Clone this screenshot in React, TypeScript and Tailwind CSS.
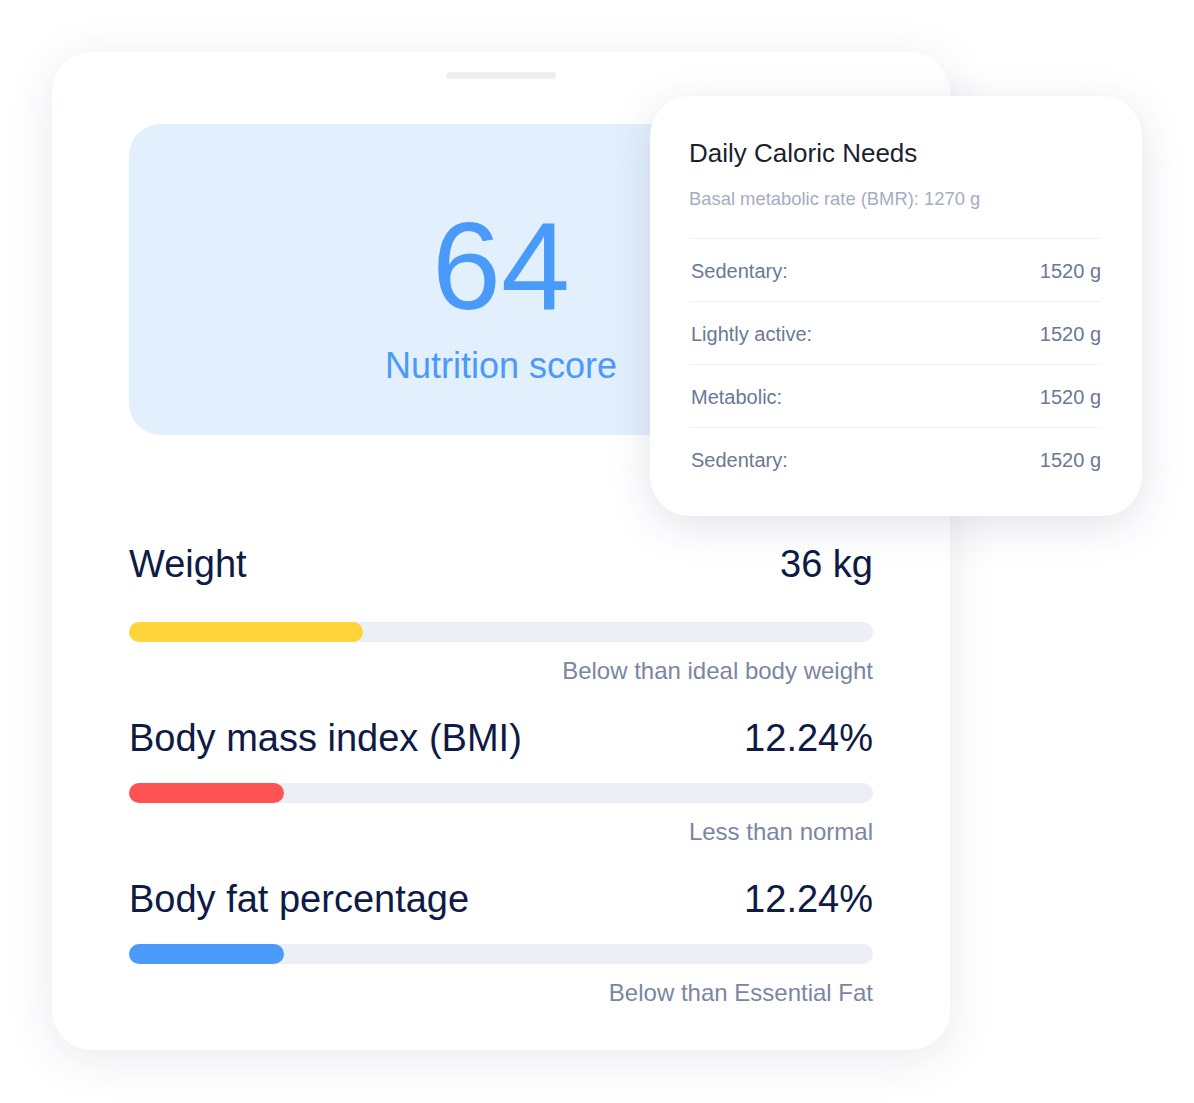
import React from "react";

type Metric = {
    label: string;
    value: string;
    note: string;
    fill: string;
    width: number;
    titleGap: string;
    topGap: string;
};

const metrics: Metric[] = [
    {
        label: "Weight",
        value: "36 kg",
        note: "Below than ideal body weight",
        fill: "bg-[#ffd43b]",
        width: 234,
        titleGap: "mt-[39px]",
        topGap: "mt-[110px]",
    },
    {
        label: "Body mass index (BMI)",
        value: "12.24%",
        note: "Less than normal",
        fill: "bg-[#ff5252]",
        width: 155,
        titleGap: "mt-[26px]",
        topGap: "mt-[36px]",
    },
    {
        label: "Body fat percentage",
        value: "12.24%",
        note: "Below than Essential Fat",
        fill: "bg-[#4a9af9]",
        width: 155,
        titleGap: "mt-[26px]",
        topGap: "mt-[36px]",
    },
];

const needs = [
    { label: "Sedentary:", value: "1520 g" },
    { label: "Lightly active:", value: "1520 g" },
    { label: "Metabolic:", value: "1520 g" },
    { label: "Sedentary:", value: "1520 g" },
];

const MetricRow = ({ item }: { item: Metric }) => (
    <div className={`flex flex-col ${item.topGap}`}>
        <div className="flex items-center justify-between text-[38px] leading-none text-[#0e1b45]">
            <span>{item.label}</span>
            <span>{item.value}</span>
        </div>
        <div className={`${item.titleGap} h-5 w-full rounded-full bg-[#eceff6]`}>
            <div className={`h-5 rounded-full ${item.fill}`} style={{ width: item.width }} />
        </div>
        <p className="mt-[17px] text-right text-[24px] leading-none text-[#7b86a3]">{item.note}</p>
    </div>
);

export default function App() {
    return (
        <div className="relative h-[1103px] w-[1194px] overflow-hidden bg-white font-['Liberation_Sans',Arial,sans-serif]">
            <div className="pl-[52px] pt-[52px]">
                <div className="flex h-[998px] w-[898px] flex-col rounded-[40px] bg-white px-[77px] pt-[20px] shadow-[0_8px_48px_rgba(40,50,90,0.10)]">
                    <div className="mx-auto h-[7px] w-[110px] rounded-full bg-[#efefef]" />

                    <div className="mt-[45px] flex h-[311px] flex-col items-center rounded-[32px] bg-[#e2effd] pt-[80px] text-[#4a9af9]">
                        <span className="text-[124px] leading-none">64</span>
                        <span className="mt-[20px] text-[36px] leading-none">Nutrition score</span>
                    </div>

                    {metrics.map((item) => (
                        <MetricRow key={item.label} item={item} />
                    ))}
                </div>
            </div>

            <div className="absolute left-[650px] top-[96px] w-[492px] rounded-[40px] bg-white pb-[26px] pl-[39px] pr-[41px] pt-[44px] shadow-[0_10px_44px_rgba(40,50,90,0.13)]">
                <h3 className="text-[26px] leading-none text-[#1c1f2e]">Daily Caloric Needs</h3>
                <p className="mt-[24px] text-[18.4px] leading-none text-[#a5adc1]">
                    Basal metabolic rate (BMR): 1270 g
                </p>
                <div className="mt-[30px]">
                    {needs.map((row, index) => (
                        <div
                            key={index}
                            className="flex items-center justify-between border-t border-[#eef0f5] pb-[20px] pl-[2px] pt-[22px] text-[20px] leading-none text-[#6b7896]"
                        >
                            <span>{row.label}</span>
                            <span>{row.value}</span>
                        </div>
                    ))}
                </div>
            </div>
        </div>
    );
}
